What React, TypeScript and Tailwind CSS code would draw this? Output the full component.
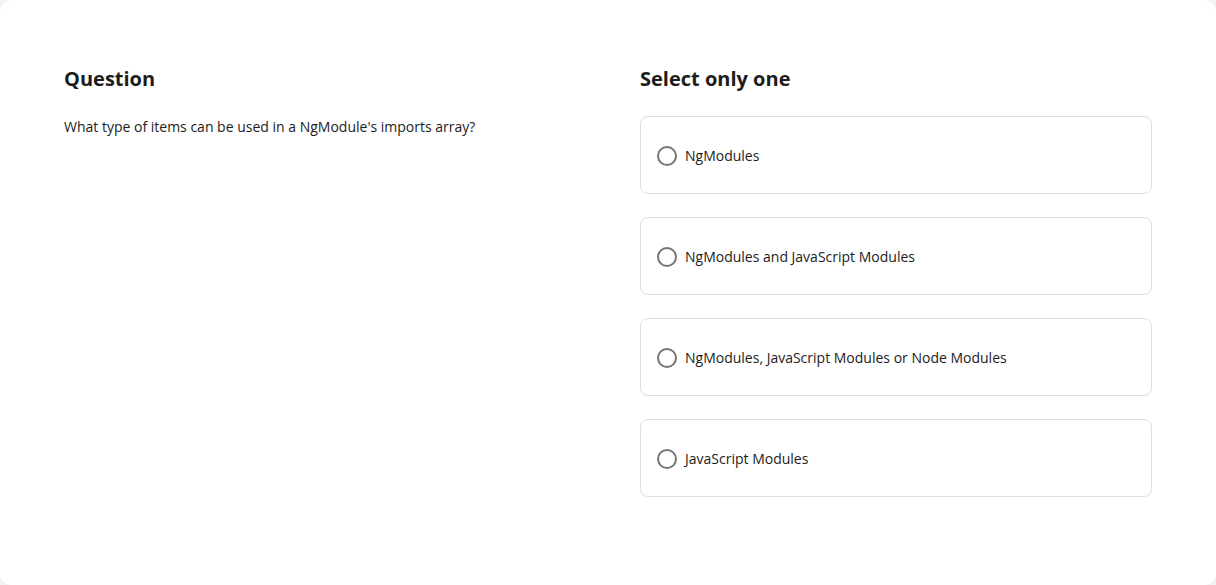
const options = [
  'NgModules',
  'NgModules and JavaScript Modules',
  'NgModules, JavaScript Modules or Node Modules',
  'JavaScript Modules',
]

export default function App() {
  return (
    <div className="h-[585px] w-full bg-[#f2f2f2] font-['Open_Sans',sans-serif] text-[#1c1c1c]">
      <div className="h-full rounded-xl bg-white px-16 pt-[65px]">
        <div className="grid grid-cols-2 gap-16">
          {/* Question */}
          <div>
            <h2 className="mb-6 text-[20px] font-bold leading-7">Question</h2>
            <p className="text-[14px] leading-5">
              What type of items can be used in a NgModule's imports array?
            </p>
          </div>

          {/* Answers */}
          <div>
            <h2 className="mb-[23px] text-[20px] font-bold leading-7">Select only one</h2>
            <div className="flex flex-col gap-[23px]">
              {options.map((opt) => (
                <label
                  key={opt}
                  className="flex h-[78px] cursor-pointer items-center gap-2 rounded-lg border border-[#dedede] px-4 pt-[2px]"
                >
                  <span className="h-5 w-5 shrink-0 rounded-full border-2 border-[#757575]" />
                  <span className="text-[14px] leading-5">{opt}</span>
                </label>
              ))}
            </div>
          </div>
        </div>
      </div>
    </div>
  )
}
